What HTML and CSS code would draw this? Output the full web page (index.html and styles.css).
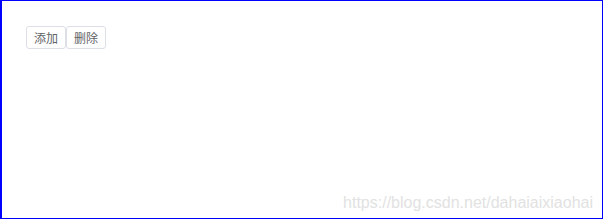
FILE: index.html
```html
<!DOCTYPE html>
<html>
<head>
<meta charset="utf-8">
<link rel="stylesheet" href="styles.css">
</head>
<body>
<div class="frame">
  <div class="toolbar">
    <button class="btn">添加</button><button class="btn">删除</button>
  </div>
  <div class="watermark">https://blog.csdn.net/dahaiaixiaohai</div>
</div>
</body>
</html>
```
FILE: styles.css
```css
html, body {
  margin: 0;
  padding: 0;
  background: #fff;
}
.frame {
  position: relative;
  box-sizing: border-box;
  width: 603px;
  height: 219px;
  border: 1px solid #0000ff;
  border-left-width: 2px;
  padding: 25px 0 0 24px;
  font-family: "Liberation Sans", "Noto Sans CJK SC", sans-serif;
}
.toolbar {
  display: flex;
}
.btn {
  box-sizing: border-box;
  height: 23px;
  margin: 0;
  padding: 3px 7px;
  border: 1px solid #dcdfe6;
  border-radius: 3px;
  background: #fff;
  color: #606266;
  font-family: "Noto Sans CJK SC", sans-serif;
  font-size: 12px;
  line-height: 15px;
}
.watermark {
  position: absolute;
  right: 9px;
  bottom: 6px;
  color: #e2e2e2;
  font-family: "Liberation Sans", Arial, sans-serif;
  font-size: 16px;
  line-height: 18px;
}
```
